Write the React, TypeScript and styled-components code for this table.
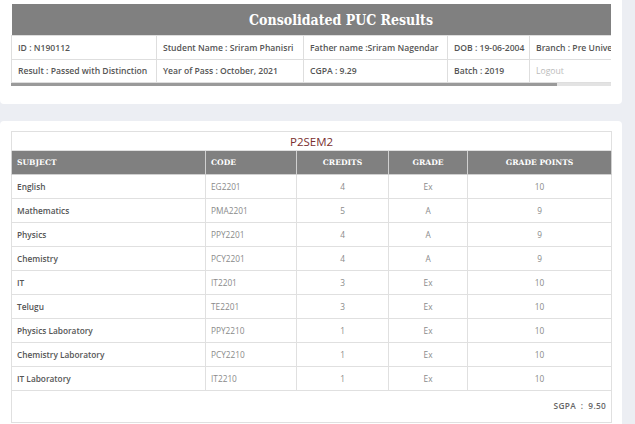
import React from 'react';
import styled, { createGlobalStyle } from 'styled-components';

const Global = createGlobalStyle`
  html, body { margin: 0; padding: 0; background: #eceef3; }
  body { font-family: "Open Sans", "Liberation Sans", sans-serif; overflow: hidden; }
`;

const Page = styled.div`
  width: 622px;
  display: flex;
  flex-direction: column;
  gap: 17px;
`;

const Card = styled.section<{ $top?: boolean }>`
  background: #fff;
  border-radius: ${p => (p.$top ? '0 0 4px 4px' : '4px 4px 0 0')};
  padding: ${p => (p.$top ? '4px 11px 18px' : '10px 11px 20px')};
`;

const Scroller = styled.div`
  overflow: hidden;
`;

const ScrollTrack = styled.div`
  height: 3px;
  background: #e3e3e3;
`;

const ScrollThumb = styled.div`
  height: 100%;
  background: #9a9a9a;
`;

const InfoTable = styled.table`
  width: 659px;
  table-layout: fixed;
  border-collapse: collapse;
`;

const TitleCell = styled.th`
  height: 31px;
  padding: 0;
  background: #808080;
  color: #fff;
  font-family: "DejaVu Serif Condensed", "DejaVu Serif", "Liberation Serif", serif;
  font-stretch: condensed;
  font-weight: bold;
  font-size: 14px;
  text-align: center;
`;

const InfoCell = styled.td<{ $muted?: boolean; $tall?: boolean }>`
  height: ${p => (p.$tall ? 23 : 22)}px;
  padding: 0 6px;
  border: 1px solid #dedede;
  font-size: 8.6px;
  font-weight: ${p => (p.$muted ? 400 : 600)};
  color: ${p => (p.$muted ? '#bbb' : '#555')};
  white-space: nowrap;
  overflow: hidden;
`;

const ResultTable = styled.table`
  width: 600px;
  table-layout: fixed;
  border-collapse: collapse;
  border: 1px solid #e0e0e0;
`;

const SemCell = styled.th`
  height: 18px;
  padding: 0;
  font-weight: 400;
  font-size: 11.5px;
  color: #7a2f2f;
  text-align: center;
  border: 1px solid #e0e0e0;
`;

const HeadCell = styled.th<{ $left?: boolean }>`
  height: 23px;
  padding: 0 5px;
  background: #808080;
  color: #fff;
  border: 1px solid #d0d0d0;
  font-family: "DejaVu Serif", "Liberation Serif", serif;
  font-weight: bold;
  font-size: 7.6px;
  text-align: ${p => (p.$left ? 'left' : 'center')};
`;

const Cell = styled.td<{ $bold?: boolean; $left?: boolean }>`
  height: 23px;
  padding: 0 5px;
  border: 1px solid #e0e0e0;
  font-size: 8.3px;
  font-weight: ${p => (p.$bold ? 600 : 400)};
  color: ${p => (p.$bold ? '#555' : '#8a8a8a')};
  text-align: ${p => (p.$left ? 'left' : 'center')};
  white-space: nowrap;
`;

const SgpaCell = styled.td`
  height: 29px;
  padding: 0 5px 2px 0;
  border: 1px solid #e0e0e0;
  text-align: right;
  font-size: 8.3px;
  font-weight: 600;
  color: #666;
  letter-spacing: 0.3px;
`;

const rows = [
  ['English', 'EG2201', '4', 'Ex', '10'],
  ['Mathematics', 'PMA2201', '5', 'A', '9'],
  ['Physics', 'PPY2201', '4', 'A', '9'],
  ['Chemistry', 'PCY2201', '4', 'A', '9'],
  ['IT', 'IT2201', '3', 'Ex', '10'],
  ['Telugu', 'TE2201', '3', 'Ex', '10'],
  ['Physics Laboratory', 'PPY2210', '1', 'Ex', '10'],
  ['Chemistry Laboratory', 'PCY2210', '1', 'Ex', '10'],
  ['IT Laboratory', 'IT2210', '1', 'Ex', '10'],
];

const infoWidth = 659;
const viewWidth = 600;

export default function App() {
  return (
    <>
      <Global />
      <Page>
        <Card $top>
          <Scroller>
            <InfoTable>
              <colgroup>
                <col style={{ width: 145 }} />
                <col style={{ width: 147 }} />
                <col style={{ width: 144 }} />
                <col style={{ width: 82 }} />
                <col style={{ width: 141 }} />
              </colgroup>
              <thead>
                <tr>
                  <TitleCell colSpan={5}>Consolidated PUC Results</TitleCell>
                </tr>
              </thead>
              <tbody>
                <tr>
                  <InfoCell $tall>ID : N190112</InfoCell>
                  <InfoCell $tall>Student Name : Sriram Phanisri</InfoCell>
                  <InfoCell $tall>Father name :Sriram Nagendar</InfoCell>
                  <InfoCell $tall>DOB : 19-06-2004</InfoCell>
                  <InfoCell $tall>Branch : Pre University Course</InfoCell>
                </tr>
                <tr>
                  <InfoCell>Result : Passed with Distinction</InfoCell>
                  <InfoCell>Year of Pass : October, 2021</InfoCell>
                  <InfoCell>CGPA : 9.29</InfoCell>
                  <InfoCell>Batch : 2019</InfoCell>
                  <InfoCell $muted>Logout</InfoCell>
                </tr>
              </tbody>
            </InfoTable>
          </Scroller>
          <ScrollTrack>
            <ScrollThumb style={{ width: `${(viewWidth / infoWidth) * 100}%` }} />
          </ScrollTrack>
        </Card>
        <Card>
          <ResultTable>
            <colgroup>
              <col style={{ width: 194 }} />
              <col style={{ width: 91 }} />
              <col style={{ width: 92 }} />
              <col style={{ width: 79 }} />
              <col style={{ width: 144 }} />
            </colgroup>
            <thead>
              <tr>
                <SemCell colSpan={5}>P2SEM2</SemCell>
              </tr>
              <tr>
                <HeadCell $left>SUBJECT</HeadCell>
                <HeadCell $left>CODE</HeadCell>
                <HeadCell>CREDITS</HeadCell>
                <HeadCell>GRADE</HeadCell>
                <HeadCell>GRADE POINTS</HeadCell>
              </tr>
            </thead>
            <tbody>
              {rows.map(r => (
                <tr key={r[1]}>
                  <Cell $bold $left>{r[0]}</Cell>
                  <Cell $left>{r[1]}</Cell>
                  <Cell>{r[2]}</Cell>
                  <Cell>{r[3]}</Cell>
                  <Cell>{r[4]}</Cell>
                </tr>
              ))}
              <tr>
                <SgpaCell colSpan={5}>SGPA&nbsp; :&nbsp; 9.50</SgpaCell>
              </tr>
            </tbody>
          </ResultTable>
        </Card>
      </Page>
    </>
  );
}
